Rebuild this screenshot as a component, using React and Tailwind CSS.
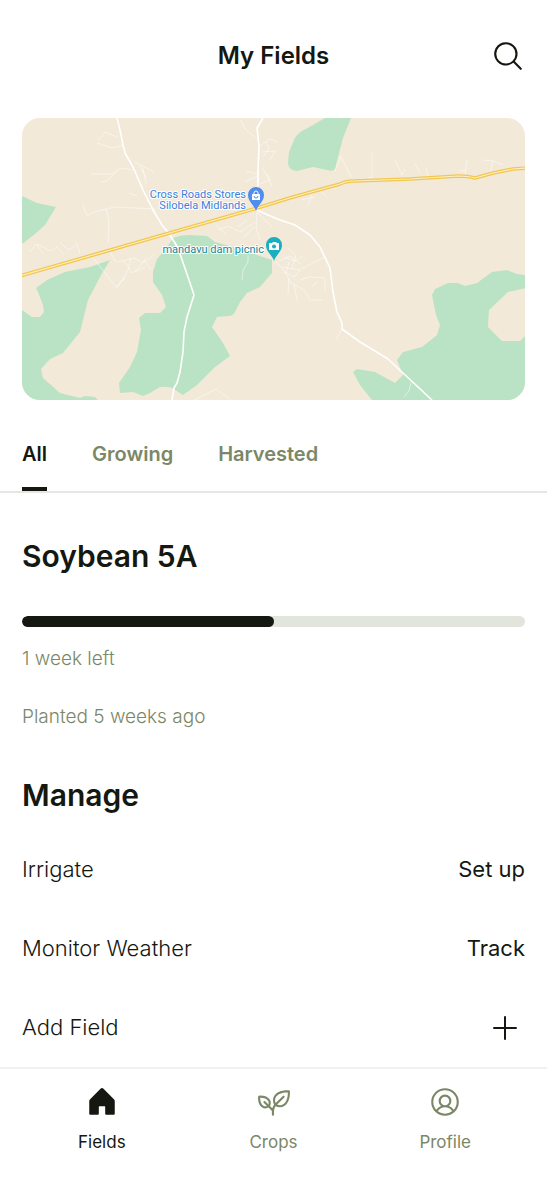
import { useState } from "react";
import clsx from "clsx";
import {
  PiHouseFill,
  PiMagnifyingGlass,
  PiPlant,
  PiPlus,
  PiUserCircle,
} from "react-icons/pi";

const tabs = ["All", "Growing", "Harvested"];

const navItems = [
  { label: "Fields", icon: PiHouseFill, active: true },
  { label: "Crops", icon: PiPlant },
  { label: "Profile", icon: PiUserCircle },
];

const highway =
  "M20 276L93 255L180 230L257 208L293 197L340 184Q346 181 354 181L410 179L458 176Q468 176 475 178L493 173L513 169L528 168";

const forests = [
  "M22 196L37 203L56 207L45 225L35 234L22 244Z",
  "M325 118L313 125L302 131Q296 135 294 140L289 152L288 163Q288 170 297 171L313 167L327 170Q333 172 335 169L338 157L343 138L351 118Z",
  "M153 272L157 259L165 250L173 238Q180 235 190 235L207 236L215 242L240 249L257 255L272 260L272 273L260 287L247 293L240 302L235 312Q233 316 228 316L217 317L212 327L223 343L230 356L215 367L197 385L183 395L172 388Q165 386 160 387L150 393L143 396L133 392L120 393L119 383L130 367L137 352L141 330L139 318L145 313L160 313L166 307L162 295L153 282Z",
  "M22 310L32 317H40L44 312L43 305L38 292L36 288L47 280L65 272L90 267L110 260L100 277L88 300L80 332L63 353L50 359L41 369L43 378L60 393L80 398L85 396L95 397L98 400H22Z",
  "M372 400L360 385L353 372L357 369L375 372L395 383L403 375L397 360L403 352L422 347L437 335L440 325L436 315L432 295L435 289L448 283H458L465 286L477 283L492 272L507 270L517 274L526 275V288L508 292L489 310L488 327L502 341H520L526 335V400Z",
];

const roads = [
  "M117 118L120 130L123 145L125 153L133 167L143 190L153 210L162 225L170 235L178 248L190 283L194 295L187 317L184 332L183 352L180 372L177 383L174 388L172 400",
  "M263 118L257 128L259 147L258 170L258 188L257 210L268 215L280 220L295 225L310 235L320 247L330 268L333 292L337 312L342 323L342 329L360 342L370 348L388 359L403 373L432 400",
];

const tracks = [
  "M91 174H112L121 168L133 170M101 182L107 181L117 171M98 141L105 132L117 137M97 143L112 148L123 145",
  "M83 205L87 216L94 212L106 209L115 207L155 209M106 209L109 221L108 242M129 193L137 196M135 162L154 172M140 166L147 179M143 169L146 184",
  "M240 119L246 130L255 137M260 146L270 139L278 142M261 152L275 151L270 160M262 168L270 180L260 184M246 171L258 174M245 182L257 176M267 174L272 186M263 157L269 149L266 142",
  "M341 156L335 171M341 157L351 177M372 152V177L368 178M395 160L402 175L405 169M415 164L420 173M426 168L428 176M467 160L465 174M460 171L466 170M483 160L493 161L503 165M493 161L490 174",
  "M312 195L308 205M320 191L326 196M301 200L315 197",
  "M30 252L36 244L43 254M37 244L50 251L57 247L64 255M60 242L68 250L75 246M76 242L80 253M110 252L116 262M92 256L116 287L126 277M123 260L132 273L145 267M118 262L134 258L143 263L154 255M131 258L128 270L117 288M135 272L147 257M144 260L151 270",
  "M257 212L256 228L260 240M257 212L272 227M255 222L240 232L228 226L218 230M247 220L237 227M254 227L244 237M216 225L226 234",
  "M276 262L284 270L290 282L304 290L310 300H323M284 257L295 261L303 256M282 267L299 270L325 257M289 278L288 295M294 284L297 300M300 280L309 277L325 278V290M312 287L318 281M288 248L296 255L292 268M284 272L294 277L300 270M289 262L286 274M279 261L290 256L301 264",
  "M248 255V262L243 270L242 280M195 400L216 389L231 400M342 329L336 340M411 382L409 391L404 397",
];

function MapPin({ x, y, color, children }) {
  return (
    <g transform={`translate(${x} ${y})`}>
      <path
        d="M0 15C-1 10-8 6-8-1a8 8 0 0 1 16 0C8 6 1 10 0 15Z"
        fill={color}
      />
      {children}
    </g>
  );
}

function FieldMap() {
  return (
    <svg
      viewBox="22 118 503 282"
      role="img"
      aria-label="Map of fields"
      className="block w-full rounded-[18px] bg-[#f2e9d8]"
    >
      <g fill="#bae3c5">
        {forests.map((d) => (
          <path key={d} d={d} />
        ))}
      </g>
      <g fill="none" stroke="#fff" strokeLinejoin="round">
        {tracks.map((d) => (
          <path key={d} d={d} strokeWidth="1" opacity="0.5" />
        ))}
        {roads.map((d) => (
          <path key={d} d={d} strokeWidth="1.6" />
        ))}
      </g>
      <g fill="none" strokeLinejoin="round">
        <path d={highway} stroke="#f3c650" strokeWidth="3.6" />
        <path d={highway} stroke="#fdf0bf" strokeWidth="1.2" />
      </g>
      <g
        textAnchor="end"
        stroke="#fff"
        strokeWidth="2"
        strokeLinejoin="round"
        paintOrder="stroke"
        className="font-['Roboto',sans-serif] text-[11px]"
      >
        <text x="246" y="198" fill="#3c80dc">
          Cross Roads Stores
        </text>
        <text x="246" y="209" fill="#3c80dc">
          Silobela Midlands
        </text>
        <text x="264" y="253" fill="#118797">
          mandavu dam picnic
        </text>
      </g>
      <MapPin x={256} y={196} color="#4f8df0">
        <rect x="-4" y="-2" width="8" height="6" rx="0.5" fill="#fff" />
        <path d="M-2-2V-3a2 2 0 0 1 4 0v1" fill="none" stroke="#fff" />
        <path d="M-2 0a2 2 0 0 0 4 0" fill="none" stroke="#4f8df0" />
      </MapPin>
      <MapPin x={274} y={246} color="#18afc0">
        <path d="M-5-3H-2L-1-4H2L3-3H5V4H-5Z" fill="#fff" />
        <circle cy="0.5" r="2" fill="#18afc0" />
      </MapPin>
    </svg>
  );
}

function ManageRow({ title, action }) {
  return (
    <li className="flex h-[79px] items-center justify-between text-[22px]">
      <span className="font-light">{title}</span>
      {action ? (
        <button type="button">{action}</button>
      ) : (
        <button type="button" aria-label={title} className="pr-1">
          <PiPlus className="size-8" />
        </button>
      )}
    </li>
  );
}

export default function App() {
  const [activeTab, setActiveTab] = useState("All");

  return (
    <div className="flex min-h-screen flex-col bg-white font-['Inter',sans-serif] text-[#151711]">
      <header className="grid h-28 grid-cols-[1fr_auto_1fr] items-center px-[22px]">
        <h1 className="col-start-2 text-[24px] font-semibold">My Fields</h1>
        <button type="button" aria-label="Search" className="justify-self-end">
          <PiMagnifyingGlass className="size-[34px]" />
        </button>
      </header>

      <main className="flex-1">
        <div className="px-[22px] pt-1.5">
          <FieldMap />
        </div>

        <div
          role="tablist"
          className="mt-8 flex gap-[45px] border-b-2 border-[#e6e7e2] px-[22px]"
        >
          {tabs.map((tab) => (
            <button
              key={tab}
              type="button"
              role="tab"
              aria-selected={tab === activeTab}
              onClick={() => setActiveTab(tab)}
              className={clsx(
                "h-[59px] border-b-4 pb-3 text-[20px] font-semibold",
                tab === activeTab
                  ? "border-[#151711]"
                  : "border-transparent text-[#7b8766]",
              )}
            >
              {tab}
            </button>
          ))}
        </div>

        <section className="px-[22px] pt-[43px]">
          <h2 className="text-[30px] leading-10 font-semibold">Soybean 5A</h2>
          <div
            role="progressbar"
            aria-label="Growth"
            aria-valuenow={50}
            className="mt-10 h-[11px] overflow-hidden rounded-full bg-[#e2e5dc]"
          >
            <div className="h-full w-1/2 rounded-full bg-[#151711]" />
          </div>
          <div className="mt-[18px] flex flex-col gap-[30px] text-[19px] leading-7 font-light text-[#7b8766]">
            <p>1 week left</p>
            <p>Planted 5 weeks ago</p>
          </div>
        </section>

        <section className="px-[22px] pt-11">
          <h2 className="text-[30px] leading-10 font-semibold">Manage</h2>
          <ul className="mt-[15px]">
            <ManageRow title="Irrigate" action="Set up" />
            <ManageRow title="Monitor Weather" action="Track" />
            <ManageRow title="Add Field" />
          </ul>
        </section>
      </main>

      <nav className="flex h-[133px] border-t-2 border-[#f1f1ef] px-4 pt-4">
        {navItems.map(({ label, icon: Icon, active }) => (
          <a
            key={label}
            href={`#${label.toLowerCase()}`}
            aria-current={active ? "page" : undefined}
            className={clsx(
              "flex flex-1 flex-col items-center gap-[11px] text-[17px] leading-6",
              !active && "text-[#7b8766]",
            )}
          >
            <Icon className="size-[34px]" />
            {label}
          </a>
        ))}
      </nav>
    </div>
  );
}
